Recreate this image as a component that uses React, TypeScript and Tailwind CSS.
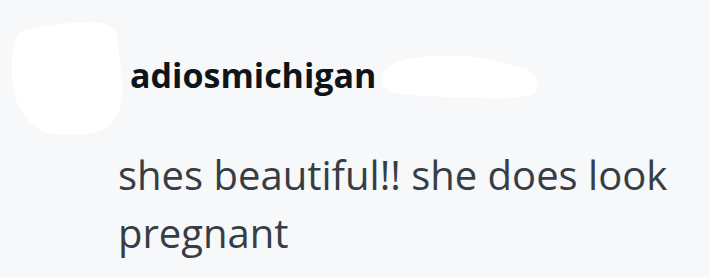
export default function App() {
  return (
    <div className="w-[709px] h-[277px] bg-[#f7f8fa] overflow-hidden font-['Open_Sans',sans-serif]">
      {/* header row: avatar + username */}
      <div className="flex items-start pt-[22px] pl-[11px]">
        <svg width="112" height="114" viewBox="0 0 112 114" className="shrink-0">
          <path
            d="M14 8 C30 3 55 1 78 0 C98 0 106 6 107 20 C108 40 112 55 111 72 C110 88 106 96 98 104 C86 112 70 114 52 113 C32 112 20 106 12 92 C3 78 0 60 1 40 C2 20 5 11 14 8 Z"
            fill="#ffffff"
          />
        </svg>
        <span className="mt-[36px] ml-[7px] text-[34px] font-bold leading-none text-[#0f1419] tracking-[0px]">
          adiosmichigan
        </span>
        <svg width="158" height="43" viewBox="0 0 158 43" className="mt-[33px] ml-[5px] shrink-0">
          <path
            d="M14 8 C30 1 55 0 85 1 C108 3 125 9 145 14 C156 18 158 26 156 34 C152 42 140 43 120 43 C90 43 55 42 30 40 C12 39 2 36 1 28 C0 18 4 12 14 8 Z"
            fill="#ffffff"
          />
        </svg>
      </div>

      {/* comment body */}
      <p className="pl-[118px] pr-4 mt-[10px] text-[40px] leading-[58px] text-[#363d44]">
        shes beautiful!! she does look pregnant
      </p>
    </div>
  );
}
